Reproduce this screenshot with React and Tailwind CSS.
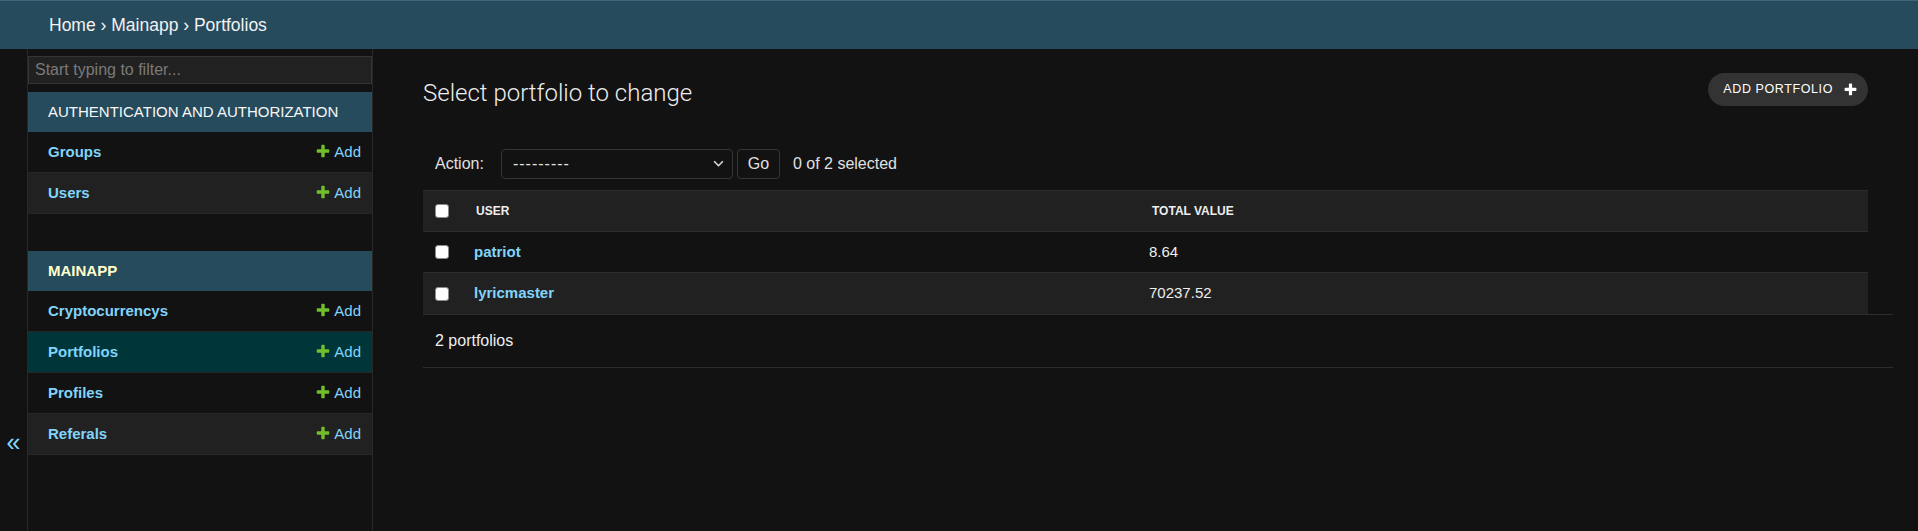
import React from "react";

const PLUS =
    "M1600 796v192q0 40-28 68t-68 28h-416v416q0 40-28 68t-68 28h-192q-40 0-68-28t-28-68v-416h-416q-40 0-68-28t-28-68v-192q0-40 28-68t68-28h416v-416q0-40 28-68t68-28h192q40 0 68 28t28 68v416h416q40 0 68 28t28 68z";

function PlusIcon({ className }) {
    return (
        <svg viewBox="0 0 1792 1792" className={className}>
            <path fill="currentColor" d={PLUS} />
        </svg>
    );
}

function Checkbox() {
    return <div className="h-[14px] w-[14px] rounded-[3px] border border-[#8a8a8a] bg-white" />;
}

const modules = [
    {
        name: "AUTHENTICATION AND AUTHORIZATION",
        current: false,
        models: [{ name: "Groups" }, { name: "Users" }],
    },
    {
        name: "MAINAPP",
        current: true,
        models: [
            { name: "Cryptocurrencys" },
            { name: "Portfolios", selected: true },
            { name: "Profiles" },
            { name: "Referals" },
        ],
    },
];

const portfolios = [
    { user: "patriot", total: "8.64" },
    { user: "lyricmaster", total: "70237.52" },
];

function SidebarModule({ module }) {
    return (
        <div className="mb-[37px]">
            <div
                className={
                    "flex h-[40px] items-center bg-[#264b5d] pl-[20px] text-[15px] " +
                    (module.current ? "font-bold text-[#ffffcc]" : "text-[#f7f7f7]")
                }
            >
                {module.name}
            </div>
            {module.models.map((m, i) => (
                <div
                    key={m.name}
                    className={
                        "flex h-[41px] items-center justify-between border-b border-[#272727] pl-[20px] pr-[11px] " +
                        (m.selected ? "bg-[#00363a]" : i % 2 === 1 ? "bg-[#212121]" : "bg-[#121212]")
                    }
                >
                    <span className="text-[15px] font-bold text-[#81d4fa]">{m.name}</span>
                    <span className="flex items-center gap-[3px] text-[15px] text-[#81d4fa]">
                        <PlusIcon className="mb-[3px] h-[16px] w-[16px] text-[#70bf2b]" />
                        Add
                    </span>
                </div>
            ))}
        </div>
    );
}

export default function App() {
    return (
        <div className="min-h-[531px] bg-[#121212] font-['Liberation_Sans',Arial,sans-serif] text-[#eeeeee]">
            {/* breadcrumbs */}
            <div className="flex h-[49px] items-center border-t border-[#3b6579] bg-[#264b5d] pl-[49px] text-[17.5px] text-[#f2f2f2]">
                Home › Mainapp › Portfolios
            </div>

            <div className="flex min-h-[482px]">
                {/* sidebar toggle */}
                <div className="flex w-[28px] shrink-0 justify-center border-r border-[#272727] pt-[381px] text-[25px] leading-none text-[#81d4fa]">
                    «
                </div>

                {/* nav sidebar */}
                <div className="w-[345px] shrink-0 border-r border-[#272727]">
                    <div className="mb-[8px] mt-[7px] flex h-[28px] items-center border border-[#353535] bg-[#212121] pl-[6px] text-[16px] text-[#7a7a7a]">
                        Start typing to filter...
                    </div>
                    {modules.map((m) => (
                        <SidebarModule key={m.name} module={m} />
                    ))}
                </div>

                {/* content */}
                <div className="flex-1 pl-[50px] pr-[50px] pt-[24px]">
                    <div className="flex h-[64px] items-start justify-between">
                        <h1 className="mt-[5px] font-['Roboto',sans-serif] text-[24px] font-light leading-[30px] text-[#eeeeee]">
                            Select portfolio to change
                        </h1>
                        <div className="flex h-[33px] items-center gap-[10px] rounded-full bg-[#333333] pl-[15px] pr-[10px] text-[12.5px] tracking-[0.6px] text-white">
                            ADD PORTFOLIO
                            <PlusIcon className="h-[15px] w-[15px] text-white" />
                        </div>
                    </div>

                    {/* actions */}
                    <div className="flex h-[53px] items-center pl-[12px] text-[16px] text-[#e0e0e0]">
                        <span>Action:</span>
                        <div className="ml-[17px] flex h-[30px] w-[232px] items-center justify-between rounded-[4px] border border-[#353535] bg-[#121212] pl-[11px] pr-[8px]">
                            <span className="tracking-[1px]">---------</span>
                            <svg viewBox="0 0 12 8" className="h-[7px] w-[11px]">
                                <polyline points="1,1.5 6,6.5 11,1.5" fill="none" stroke="#dddddd" strokeWidth="1.8" />
                            </svg>
                        </div>
                        <div className="ml-[4px] flex h-[30px] w-[43px] items-center justify-center rounded-[4px] border border-[#353535] bg-[#121212]">
                            Go
                        </div>
                        <span className="ml-[13px]">0 of 2 selected</span>
                    </div>

                    {/* results */}
                    <div className="border-t border-[#2c2c2c]">
                        <div className="grid h-[41px] grid-cols-[39px_675px_1fr] items-center border-b border-[#2c2c2c] bg-[#212121] text-[12px] font-bold text-[#eeeeee]">
                            <div className="pl-[12px]">
                                <Checkbox />
                            </div>
                            <div className="pl-[14px]">USER</div>
                            <div className="pl-[15px]">TOTAL VALUE</div>
                        </div>
                        {portfolios.map((p, i) => (
                            <div
                                key={p.user}
                                className={
                                    "grid h-[41px] grid-cols-[39px_675px_1fr] items-center text-[15px] " +
                                    (i % 2 === 1 ? "bg-[#212121]" : "border-b border-[#2c2c2c] bg-[#121212]")
                                }
                            >
                                <div className="pl-[12px]">
                                    <Checkbox />
                                </div>
                                <div className="pl-[12px] font-bold text-[#81d4fa]">{p.user}</div>
                                <div className="pl-[12px] text-[#eeeeee]">{p.total}</div>
                            </div>
                        ))}
                    </div>
                    <div className="-mr-[25px] flex h-[54px] items-center border-y border-[#2c2c2c] pl-[12px] text-[16px] text-[#eeeeee]">
                        2 portfolios
                    </div>
                </div>
            </div>
        </div>
    );
}
